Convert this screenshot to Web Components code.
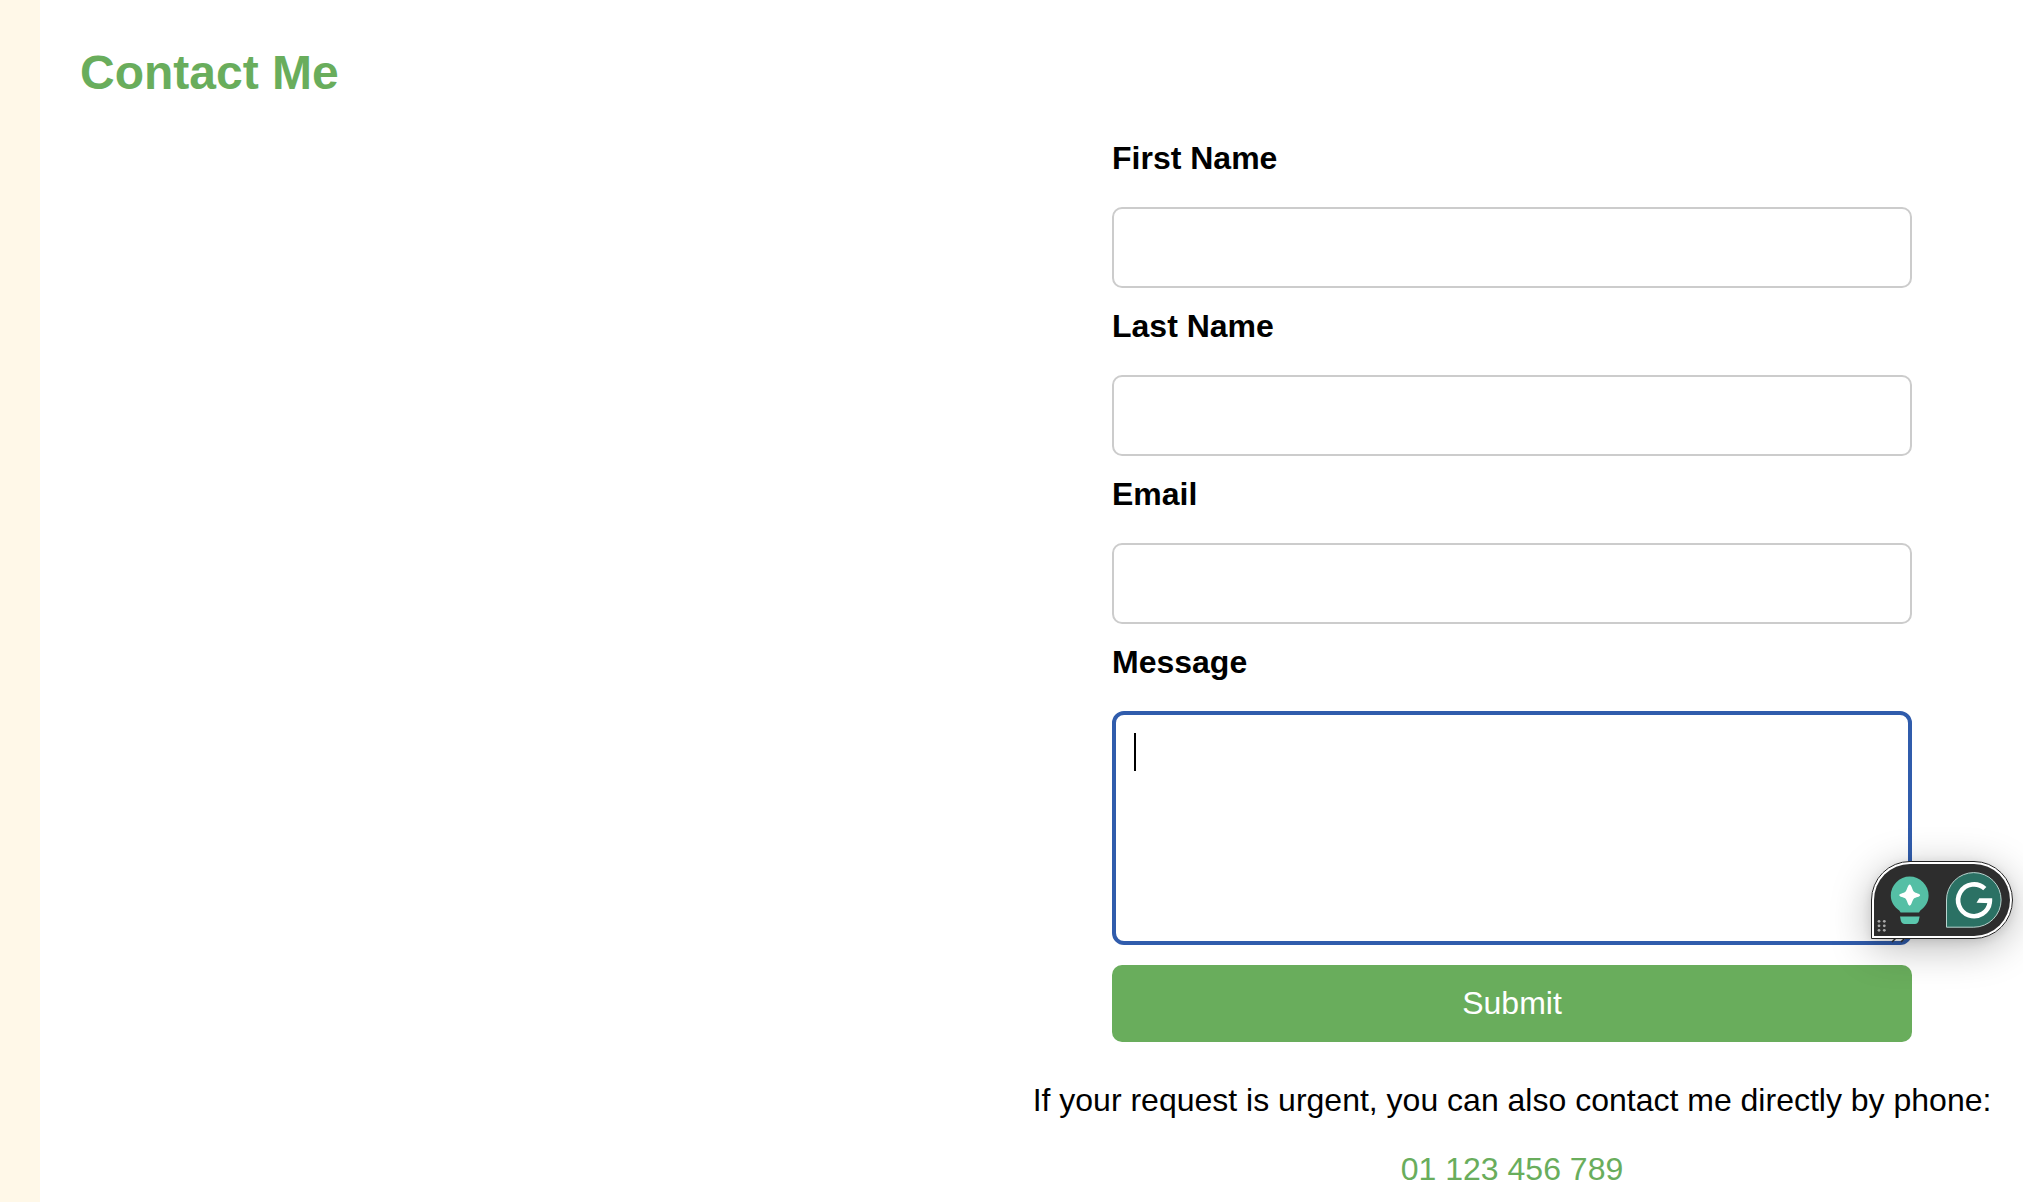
<!DOCTYPE html>
<html lang="en">
<head>
<meta charset="utf-8">
<title>Contact Me</title>
<style>
html,body{margin:0;height:100%;background:#fff;overflow:hidden}
body{font-family:"Liberation Sans",Arial,sans-serif;font-size:32px;line-height:37px;color:#000}
</style>
</head>
<body>
<contact-page>
  <span slot="title">Contact Me</span>
  <contact-form>
    <text-field label="First Name"></text-field>
    <text-field label="Last Name"></text-field>
    <text-field label="Email"></text-field>
    <message-field label="Message"><writing-assistant></writing-assistant></message-field>
    <submit-button>Submit</submit-button>
  </contact-form>
  <phone-note number="01 123 456 789">If your request is urgent, you can also contact me directly by phone:</phone-note>
</contact-page>
<script>
function define(name, html, setup) {
  customElements.define(name, class extends HTMLElement {
    connectedCallback() {
      if (this.shadowRoot) return;
      this.attachShadow({mode: "open"}).innerHTML = html;
      if (setup) setup(this, this.shadowRoot);
    }
  });
}
const setLabel = (host, root) => {
  root.querySelector("label").textContent = host.getAttribute("label");
};
define("contact-page", `
<style>
:host{display:flex;height:1202px;overflow:hidden}
aside{flex:0 0 40px;background:#fff8e8}
main{flex:1;padding:45px 0 0 40px;box-sizing:border-box}
h2{margin:0 0 40px;font-size:48px;line-height:55px;color:#69ad5c}
section{width:958px;margin-left:953px;display:flex;flex-direction:column;align-items:center;gap:40px}
</style>
<aside></aside><main><h2><slot name="title"></slot></h2><section><slot></slot></section></main>`);
define("contact-form", `
<style>:host{display:flex;flex-direction:column;gap:20px;width:800px}</style><slot></slot>`);
define("text-field", `
<style>
:host{display:flex;flex-direction:column;gap:30px}
label{font-weight:bold}
input{box-sizing:border-box;width:100%;height:81px;margin:0;padding:20px;border:2px solid #ccc;border-radius:10px;font:inherit;background:#fff;outline:0}
</style>
<label for="f"></label><input id="f" type="text">`, setLabel);
define("message-field", `
<style>
:host{display:flex;flex-direction:column;gap:30px}
label{font-weight:bold}
.box{position:relative;height:234px}
textarea{display:block;box-sizing:border-box;width:100%;height:100%;margin:0;padding:18px 20px;border:4px solid #305cac;border-radius:12px;font:inherit;resize:none;outline:0;background:#fff}
.caret{position:absolute;left:22px;top:22px;width:2px;height:38px;background:#000}
.grip{position:absolute;right:4px;bottom:2px}
::slotted(writing-assistant){position:absolute;left:759px;top:150px}
</style>
<label for="f"></label>
<div class="box"><textarea id="f"></textarea><div class="caret"></div>
<svg class="grip" width="18" height="18" viewBox="0 0 18 18"><path d="M2 17 17 2M11 17 17 11" stroke="#333" stroke-width="1.5"/></svg>
<slot></slot></div>`, setLabel);
define("submit-button", `
<style>
:host{display:block}
button{display:block;width:100%;height:77px;margin:0;padding:20px;border:0;border-radius:10px;background:#69ad5c;color:#fff;font:inherit}
</style><button type="button"><slot></slot></button>`);
define("phone-note", `
<style>
:host{display:flex;flex-direction:column;align-items:center;gap:32px;white-space:nowrap}
p{margin:0}
a{color:#69ad5c;text-decoration:none}
</style><p><slot></slot></p><a></a>`, (host, root) => {
  const a = root.querySelector("a");
  a.textContent = host.getAttribute("number");
  a.href = "tel:" + host.getAttribute("number").replace(/ /g, "");
});
define("writing-assistant", `
<style>
:host{display:block;box-sizing:border-box;width:142px;height:78px;border-radius:39px 39px 39px 0;box-shadow:0 8px 40px rgba(0,0,0,.28),0 2px 10px rgba(0,0,0,.1)}
svg{display:block}
</style>
<svg width="142" height="78" viewBox="0 0 142 78">
<path d="M.5 77.5V39A38.5 38.5 0 0 1 39 .5H103A38.5 38.5 0 0 1 103 77.5Z" fill="#fff" stroke="#222"/>
<path d="M3 75V39A36 36 0 0 1 39 3H103A36 36 0 0 1 103 75Z" fill="#2d2d2d"/>
<path d="M29.600 51.500L28.300 49.500C23 46 19.800 40.500 19.800 34.500A18.900 18.900 0 0 1 57.600 34.500C57.600 40.500 54.400 46 49.300 49.500L48 51.500Z" fill="#55bfa5"/>
<path d="M29 55.500H48.600L47.800 59.500Q47 62.900 44 62.900H33.600Q30.600 62.900 29.800 59.500Z" fill="#5bc7ad"/>
<path d="M38.700 23.600C40.600 23.600 41.300 29.500 43 30.800C44.500 32.400 49.100 32.500 49.100 34.200S44.500 36 43 37.600C41.300 38.900 40.600 44.700 38.700 44.700S36.100 38.900 34.400 37.600C32.900 36 28.300 35.900 28.300 34.200S32.900 32.400 34.400 30.800C36.100 29.500 36.800 23.600 38.700 23.600Z" fill="#fff"/>
<g fill="#aaa"><circle cx="8" cy="60.300" r="1.400"/><circle cx="13.300" cy="60.300" r="1.400"/><circle cx="8" cy="64.800" r="1.400"/><circle cx="13.300" cy="64.800" r="1.400"/><circle cx="8" cy="69.300" r="1.400"/><circle cx="13.300" cy="69.300" r="1.400"/></g>
<path d="M75.500 66.200V39A27.300 27.300 0 1 1 102.800 66.200Z" fill="#2b7164" stroke="#b9d3ce"/>
<path d="M113.800 27.600A15.900 15.900 0 1 0 118.800 41.300" fill="none" stroke="#fff" stroke-width="4.600"/>
<path d="M108.300 37.200H121.200V40L120.900 42.300L105.500 41.800Z" fill="#fff"/>
</svg>`);
</script>
</body>
</html>
